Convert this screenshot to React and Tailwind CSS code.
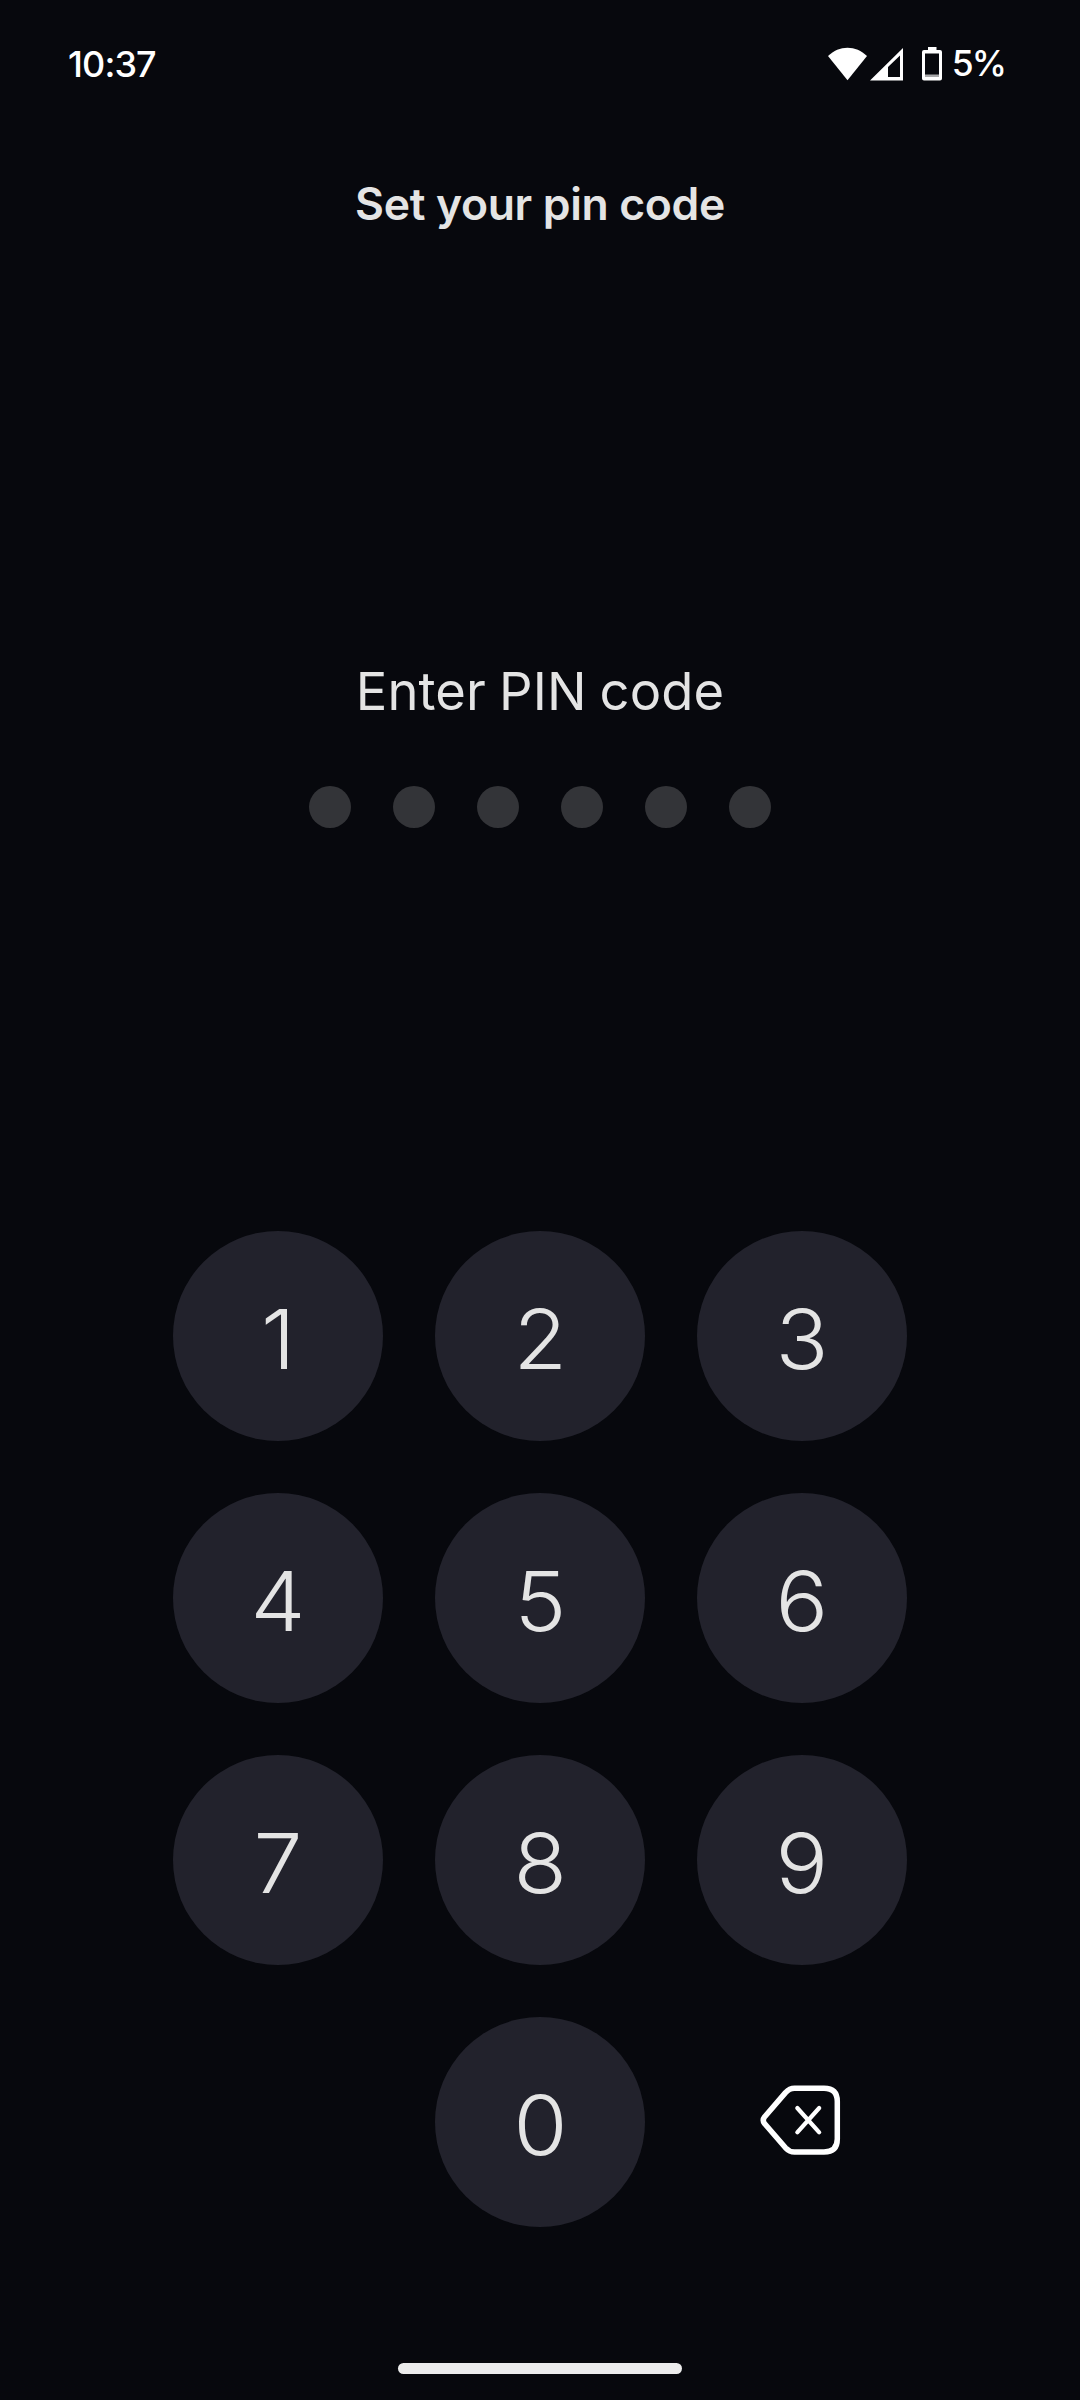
import React from "react";

function StatusBar() {
  return (
    <header className="flex h-[128px] shrink-0 items-center justify-between pl-[68px] pr-[75px] text-white">
      <span className="text-[36px] font-medium leading-none tracking-[-0.900px]">10:37</span>
      <div className="flex items-center">
        <svg className="h-[34px] w-[40px]" viewBox="828 46.5 40 34" fill="currentColor">
          <path d="M828 55.6C839 44.300 856 44.300 867 55.6L847.500 79.800Z" />
        </svg>
        <svg className="ml-[2px] h-[34px] w-[33px]" viewBox="870 46.500 33 34" fill="currentColor" fillRule="evenodd">
          <path d="M870 80L903 47.500V80ZM888 66.500V76.500H900V55Z" />
        </svg>
        <svg className="ml-[19px] h-[35px] w-[20px]" viewBox="922 46.500 20 35" fill="currentColor" fillRule="evenodd">
          <path d="M928 46.500H936.500V49.500H940A2 2 0 0 1 942 51.500V78A2 2 0 0 1 940 80H924A2 2 0 0 1 922 78V51.500A2 2 0 0 1 924 49.500H928ZM925 53V76.500H939V53Z" />
          <path d="M925 74H939V76.500H925Z" opacity="0.65" />
        </svg>
        <span className="ml-[10px] text-[35.500px] font-medium leading-none tracking-[-2px]">5%</span>
      </div>
    </header>
  );
}

function Key({ label }) {
  return (
    <button className="flex size-[210px] items-center justify-center rounded-full bg-[#22222c] pt-[6px] text-[82.500px] font-[320] leading-none">
      <span className="scale-x-[1.06]">{label}</span>
    </button>
  );
}

function BackspaceIcon() {
  return (
    <svg className="size-[120px]" viewBox="0 0 120 120" fill="none" stroke="#fff" strokeLinecap="round" strokeLinejoin="round">
      <path
        d="M54.500 28.300H84Q97.300 28.300 97.300 41.500V79Q97.300 92 84 92H54.500Q49.500 92 45.500 87.800L24.500 63.500Q22 60.200 24.500 57L45.500 32.600Q49.500 28.300 54.500 28.300Z"
        strokeWidth="5.500"
      />
      <path d="M57.300 48L79.200 72.300M79.200 48L57.300 72.300" strokeWidth="4.200" />
    </svg>
  );
}

export default function App() {
  return (
    <main className="flex h-[2400px] w-[1080px] flex-col overflow-hidden bg-[#07080d] font-['Inter',sans-serif] text-[#e4e4e4]">
      <StatusBar />
      <h1 className="mt-[46px] h-[60px] text-center text-[44.500px] font-semibold leading-[60px] tracking-[-0.350px]">
        Set your pin code
      </h1>
      <p className="mt-[422px] h-[70px] text-center text-[52.500px] font-normal leading-[70px] tracking-[0.150px] [word-spacing:-2px]">
        Enter PIN code
      </p>
      <div className="mt-[60px] flex justify-center gap-[42px]">
        {[0, 1, 2, 3, 4, 5].map((i) => (
          <span key={i} className="size-[42px] rounded-full bg-[#333438]" />
        ))}
      </div>
      <div className="mx-auto mt-[403px] grid grid-cols-3 gap-[52px]">
        {["1", "2", "3", "4", "5", "6", "7", "8", "9"].map((n) => (
          <Key key={n} label={n} />
        ))}
        <span />
        <Key label="0" />
        <button className="flex size-[210px] items-center justify-center pb-[4px] pr-[4px]" aria-label="Delete">
          <BackspaceIcon />
        </button>
      </div>
      <div className="mx-auto mt-[136px] h-[11px] w-[284px] rounded-full bg-[#ececec]" />
    </main>
  );
}
